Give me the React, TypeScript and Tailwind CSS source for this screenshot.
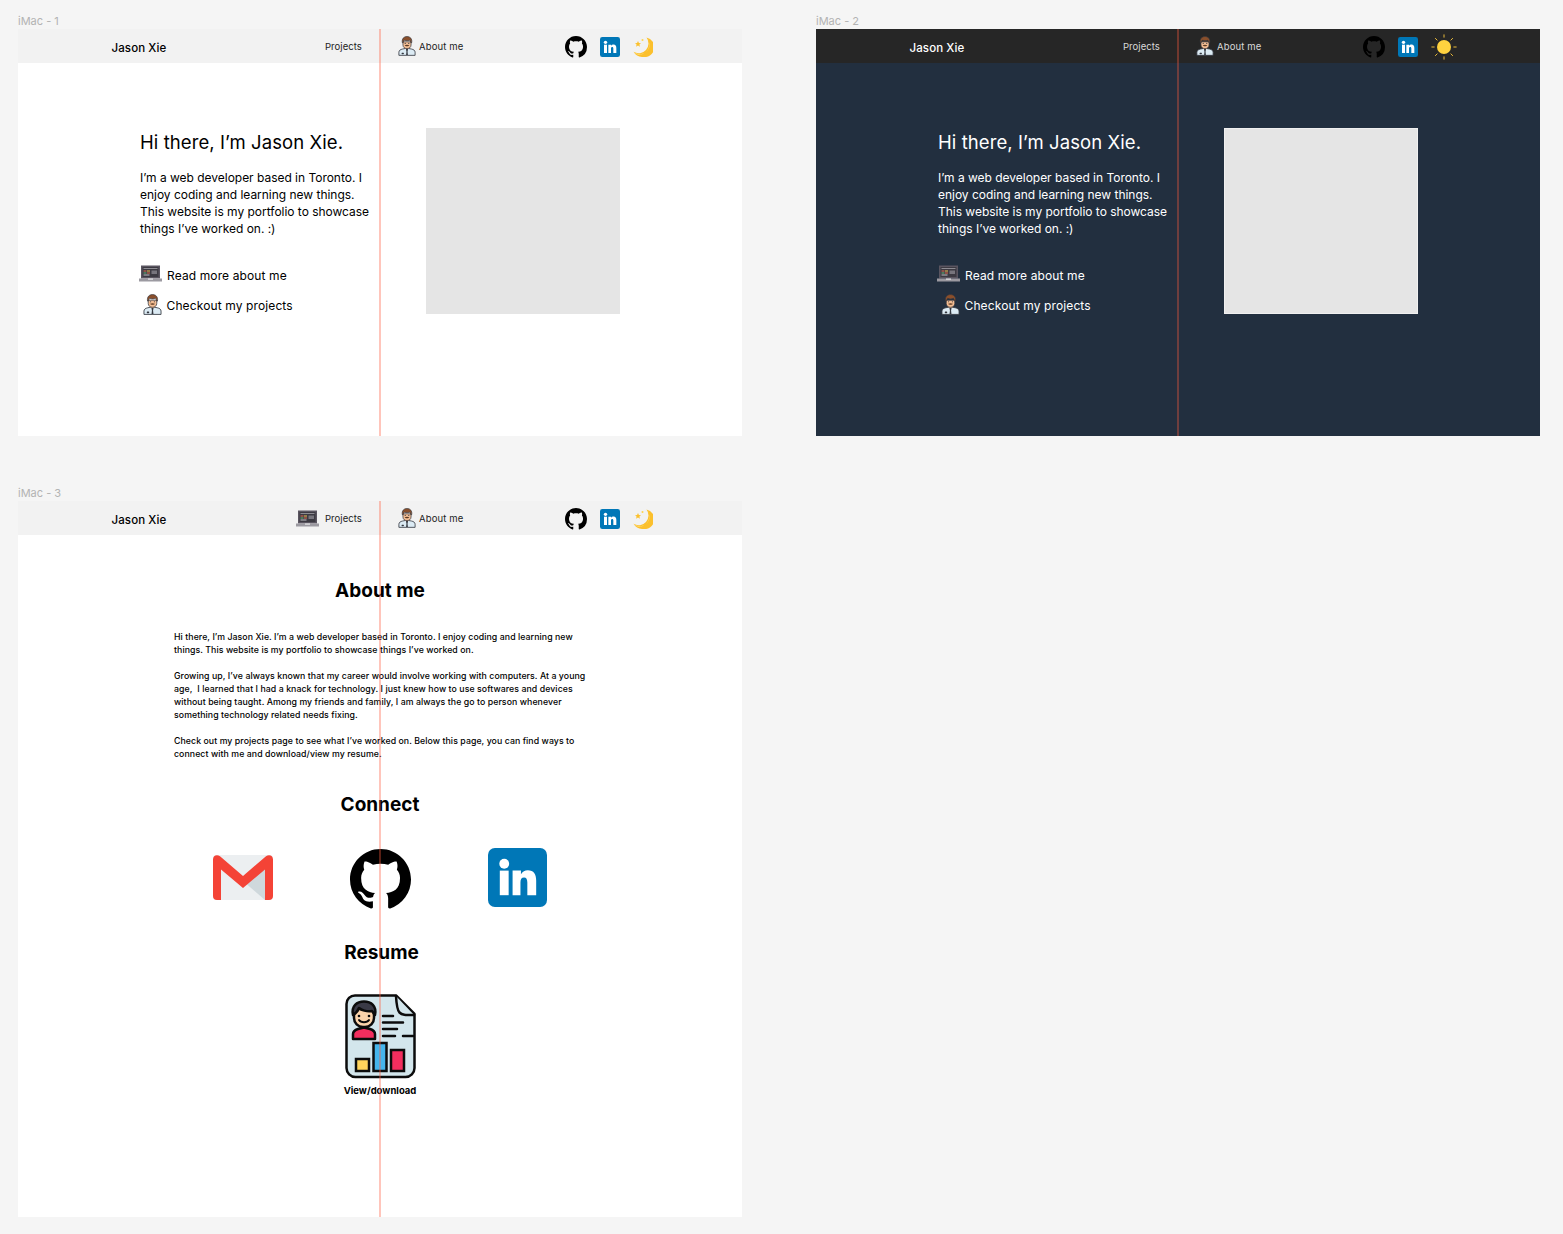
const font = "font-['Inter','Liberation_Sans',sans-serif]";

function GithubMark({ size }: { size: number }) {
  return (
    <svg width={size} height={size} viewBox="0 0 16 16" fill="#000">
      <path d="M8 0C3.58 0 0 3.58 0 8c0 3.54 2.29 6.53 5.47 7.59.4.07.55-.17.55-.38 0-.19-.01-.82-.01-1.49-2.01.37-2.53-.49-2.69-.94-.09-.23-.48-.94-.82-1.13-.28-.15-.68-.52-.01-.53.63-.01 1.08.58 1.23.82.72 1.21 1.87.87 2.33.66.07-.52.28-.87.51-1.07-1.78-.2-3.64-.89-3.64-3.95 0-.87.31-1.59.82-2.15-.08-.2-.36-1.02.08-2.12 0 0 .67-.21 2.2.82.64-.18 1.32-.27 2-.27.68 0 1.36.09 2 .27 1.53-1.04 2.2-.82 2.2-.82.44 1.1.16 1.92.08 2.12.51.56.82 1.27.82 2.15 0 3.07-1.87 3.75-3.65 3.95.29.25.54.73.54 1.48 0 1.07-.01 1.93-.01 2.2 0 .21.15.46.55.38A8.013 8.013 0 0016 8c0-4.42-3.58-8-8-8z" />
    </svg>
  );
}

function LinkedinLogo({ size }: { size: number }) {
  return (
    <svg width={size} height={size} viewBox="0 0 60 60">
      <rect width="60" height="60" rx="7" fill="#0077b7" />
      <circle cx="16.500" cy="16" r="5" fill="#fff" />
      <rect x="12" y="23" width="9" height="25" fill="#fff" />
      <path
        d="M25 23h8.500v3.600c1.700-2.700 4-4 7-4 6 0 8.500 4 8.500 10.500V48h-9V35c0-3-1-5-3.300-5-2.700 0-3.700 2-3.700 5v13H25z"
        fill="#fff"
      />
    </svg>
  );
}

function Moon() {
  return (
    <svg width="20" height="20" viewBox="0 0 20 20">
      <path d="M13.500.5A9.800 9.800 0 0 1 .6 14.800 9.700 9.700 0 0 0 9.500 19.900 9.900 9.900 0 0 0 13.500.5z" fill="#fbc02d" />
      <path d="M13.500.5A8.800 8.800 0 0 1 .6 14.800 7.500 7.500 0 0 0 11.500 16 10 10 0 0 0 13.500.5z" fill="#ffe082" />
      <path d="M5 4l.9 2 2.100.2-1.600 1.400.5 2.100L5 8.600 3.100 9.700l.5-2.100L2 6.200 4.100 6z" fill="#fbc02d" />
      <circle cx="9.500" cy="3" r="1" fill="#ffd54f" />
    </svg>
  );
}

function Sun() {
  return (
    <svg width="26" height="26" viewBox="0 0 26 26">
      <circle cx="13" cy="13" r="7" fill="#ffd23f" />
      <g stroke="#e8b93a" strokeWidth="1" strokeLinecap="round">
        <path d="M13 .8v2.400M13 22.800v2.400M.8 13h2.400M22.800 13h2.400M4.400 4.400l1.700 1.700M19.900 19.900l1.700 1.700M4.400 21.600l1.700-1.700M19.900 6.100l1.700-1.700" />
      </g>
    </svg>
  );
}

function Person({ width }: { width: number }) {
  return (
    <svg width={width} height={width * 1.1} viewBox="0 0 20 22">
      <path d="M1 21.500v-3.500c0-2 1.700-3 4-3.500l5-1 5 1c2.300.5 4 1.500 4 3.500v3.500z" fill="#dcebf4" stroke="#33373f" strokeWidth=".9" />
      <path d="M8.800 14.500h2.400l-.6 3 .4 3.500H9l.4-3.500z" fill="#33373f" />
      <rect x="8" y="11" width="4" height="3.500" fill="#e8a97f" />
      <path d="M5.500 6.500h9v3.500c0 2.500-2 4-4.500 4s-4.500-1.500-4.500-4z" fill="#f3bd93" stroke="#33373f" strokeWidth=".8" />
      <path d="M4.800 7.500C4 3 6.500.6 10 .6s6 2.400 5.200 6.900l-1-.2c-.2-1.400-.6-2.300-1.200-2.700-1.800.8-3.900.8-5.900 0-.6.4-1 1.300-1.300 2.700z" fill="#8a4f2b" stroke="#33373f" strokeWidth=".7" />
      <path d="M7.500 10.300c1.600-.8 3.400-.8 5 0-.4 1.500-4.600 1.500-5 0z" fill="#5d3a22" />
      <circle cx="8" cy="8.200" r=".6" fill="#33373f" />
      <circle cx="12" cy="8.200" r=".6" fill="#33373f" />
      <rect x="4" y="18.500" width="2.500" height="1.800" rx=".5" fill="#33373f" />
    </svg>
  );
}

function Laptop() {
  return (
    <svg width="23" height="17" viewBox="0 0 23 17">
      <rect x="2" y=".5" width="19" height="13" fill="#5a5560" />
      <rect x="3.500" y="2" width="16" height="10" fill="#3c3a42" />
      <rect x="4.500" y="3" width="14" height="1" fill="#8d8b92" />
      <rect x="4.500" y="5.500" width="3" height="1" fill="#e0694f" />
      <rect x="8" y="5.500" width="3" height="1" fill="#e9c14f" />
      <rect x="4.500" y="7.500" width="3" height="1" fill="#5fb878" />
      <rect x="8" y="7.500" width="3" height="1" fill="#e0694f" />
      <rect x="12.500" y="5.500" width="5.500" height="3.500" fill="#77757d" />
      <rect x="4.500" y="9.500" width="6" height="1" fill="#bdbdc2" />
      <rect y="13.500" width="23" height="3" fill="#9c9aa1" />
      <rect x="9" y="13.500" width="5" height="1.200" fill="#e4e4e6" />
    </svg>
  );
}

function Gmail() {
  return (
    <svg width="60" height="45" viewBox="0 0 60 45">
      <path d="M3 0h54a3 3 0 0 1 3 3v39a3 3 0 0 1-3 3H3a3 3 0 0 1-3-3V3a3 3 0 0 1 3-3z" fill="#eceff1" />
      <path d="M30 26L52 10v35z" fill="#cfd8dc" />
      <path d="M0 4.500C0 .5 4-1 7 1.300L30 21 53 1.300C56-1 60 .5 60 4.500V41c0 2.500-1.500 4-4 4h-4V14.500L30 33 8 14.500V45H4c-2.500 0-4-1.500-4-4z" fill="#f44336" />
    </svg>
  );
}

function ResumeIcon() {
  return (
    <svg width="71" height="85" viewBox="0 0 71 85">
      <path d="M10 1.500h41l18.500 18.500v54a9 9 0 0 1-9 9H10.500a9 9 0 0 1-9-9V10a8.500 8.500 0 0 1 8.500-8.500z" fill="#d3e6ec" stroke="#0c0c0c" strokeWidth="2.500" strokeLinejoin="round" />
      <path d="M51 2c.5 9 1 14 3.500 16.500S60 21 69 21" fill="#d3e6ec" stroke="#0c0c0c" strokeWidth="2.500" strokeLinecap="round" />
      <path d="M8 45v-5c0-3 2-4 5-5l6-1.500 6 1.500c3 1 5 2 5 5v5z" fill="#f32e5e" stroke="#0c0c0c" strokeWidth="2.500" strokeLinejoin="round" />
      <rect x="9" y="12" width="20" height="21" rx="9" fill="#fcd4ab" stroke="#0c0c0c" strokeWidth="2.500" />
      <path d="M8 21C6 12 12 7.500 19 7.500S32 12 30 21l-3-4c-5 1-11-1-13-3-1 3-3 5-6 7z" fill="#3a3a46" stroke="#0c0c0c" strokeWidth="2.500" strokeLinejoin="round" />
      <path d="M14 26c2 3 8 3 10 0" fill="none" stroke="#0c0c0c" strokeWidth="2" strokeLinecap="round" />
      <circle cx="14" cy="22" r="1.300" fill="#0c0c0c" />
      <circle cx="24" cy="22" r="1.300" fill="#0c0c0c" />
      <g stroke="#0c0c0c" strokeWidth="2.500" strokeLinecap="round">
        <path d="M38 22h10M38 28.500h20M38 35h14M38 42h12M58 42h10" />
      </g>
      <rect x="11" y="65" width="13" height="12" fill="#ffd45c" stroke="#0c0c0c" strokeWidth="2.500" />
      <rect x="28.500" y="49" width="13" height="28" fill="#45b5ec" stroke="#0c0c0c" strokeWidth="2.500" />
      <rect x="46" y="56" width="13" height="21" fill="#f32e5e" stroke="#0c0c0c" strokeWidth="2.500" />
    </svg>
  );
}

function Header({ dark, projectsIcon }: { dark?: boolean; projectsIcon?: boolean }) {
  const small = dark ? "text-[#d9d9d9]" : "text-[#222]";
  return (
    <div className={`flex h-[34px] items-center ${dark ? "bg-[#262626]" : "bg-[#f2f2f2]"}`}>
      <span className={`ml-[93.500px] w-[184.500px] whitespace-nowrap pt-[6px] text-[11.500px] font-medium tracking-[0.1px] ${dark ? "text-white" : "text-black"}`}>
        Jason Xie
      </span>
      <span className="flex w-[29px] items-center">{projectsIcon && <Laptop />}</span>
      <span className={`w-[73px] whitespace-nowrap pt-[2px] text-[9.500px] tracking-[0.05px] ${small}`}>Projects</span>
      <span className="flex w-[21px] items-center"><Person width={18} /></span>
      <span className={`w-[146px] whitespace-nowrap pt-[2px] text-[9.500px] tracking-[0.15px] ${small}`}>About me</span>
      <span className="flex items-center gap-[13px] pt-px">
        <GithubMark size={22} />
        <LinkedinLogo size={20} />
        <span className="flex">{dark ? <Sun /> : <Moon />}</span>
      </span>
    </div>
  );
}

function Hero({ dark }: { dark?: boolean }) {
  return (
    <div className={`flex h-[373px] pl-[122px] pt-[65px] ${dark ? "bg-[#222f3f] text-white" : "bg-white text-black"}`}>
      <div className="w-[286px]">
        <h1 className="whitespace-nowrap text-[18.500px] leading-[28px] tracking-[0.08px]">Hi there, I’m Jason Xie.</h1>
        <p className="mt-[12.500px] whitespace-nowrap text-[12px] leading-[17px] tracking-[-0.02px]">
          I’m a web developer based in Toronto. I
          <br />
          enjoy coding and learning new things.
          <br />
          This website is my portfolio to showcase
          <br />
          things I’ve worked on. :)
        </p>
        <div className="mt-[27px] flex h-[24px] items-center text-[12px] tracking-[0.12px]">
          <span className="-ml-px -mt-[5px] flex w-[28px]"><Laptop /></span>
          Read more about me
        </div>
        <div className="mt-[6px] flex h-[24px] items-center text-[12px] tracking-[0.12px]">
          <span className="-mt-[2px] flex w-[26.500px] pl-[3px]"><Person width={19} /></span>
          Checkout my projects
        </div>
      </div>
      <div className={`h-[186px] w-[194px] bg-[#e5e5e5] ${dark ? "border border-[#f0f0f0]" : ""}`} />
    </div>
  );
}

function About() {
  const heading = "text-[19px] font-bold leading-[28px] text-black";
  return (
    <div className="h-[682px] bg-white pt-[42px] text-black">
      <h2 className={`text-center ${heading}`}>About me</h2>
      <div className="ml-[156px] mt-[25.500px] whitespace-nowrap text-[8.750px] font-medium leading-[13px] tracking-[0.07px]">
        <p>
          Hi there, I’m Jason Xie. I’m a web developer based in Toronto. I enjoy coding and learning new
          <br />
          things. This website is my portfolio to showcase things I’ve worked on.
        </p>
        <p className="mt-[13px]">
          Growing up, I’ve always known that my career would involve working with computers. At a young
          <br />
          age,&nbsp; I learned that I had a knack for technology. I just knew how to use softwares and devices
          <br />
          without being taught. Among my friends and family, I am always the go to person whenever
          <br />
          something technology related needs fixing.
        </p>
        <p className="mt-[13px]">
          Check out my projects page to see what I’ve worked on. Below this page, you can find ways to
          <br />
          connect with me and download/view my resume.
        </p>
      </div>
      <h2 className={`mt-[30px] text-center ${heading}`}>Connect</h2>
      <div className="mx-auto mt-[29.500px] grid h-[61px] w-[411px] grid-cols-3 items-start justify-items-center">
        <span className="mt-[7px] flex"><Gmail /></span>
        <span className="mt-px flex"><GithubMark size={61} /></span>
        <LinkedinLogo size={59} />
      </div>
      <h2 className={`mt-[30px] pl-[3px] text-center ${heading}`}>Resume</h2>
      <div className="mt-[27px] flex justify-center"><ResumeIcon /></div>
      <p className="mt-[5px] text-center text-[9.500px] font-bold leading-[14px]">View/download</p>
    </div>
  );
}

function Frame({ label, children, lineClass }: { label: string; children: React.ReactNode; lineClass: string }) {
  return (
    <div>
      <div className="h-[14px] text-[11px] leading-[12px] text-[#b3b3b3]">{label}</div>
      <div className="relative">
        {children}
        <div className={`absolute inset-y-0 left-1/2 w-[2px] -translate-x-1/2 ${lineClass}`} />
      </div>
    </div>
  );
}

export default function App() {
  return (
    <div className={`${font} h-[1234px] w-[1563px] overflow-hidden bg-[#f5f5f5] pl-[18px] pt-[15px]`}>
      <div className="grid grid-cols-[724px_724px] gap-x-[74px] gap-y-[51px]">
        <Frame label="iMac - 1" lineClass="bg-[#ff5a3c]/35">
          <Header />
          <Hero />
        </Frame>
        <Frame label="iMac - 2" lineClass="bg-[#ff5a3c]/35">
          <Header dark />
          <Hero dark />
        </Frame>
        <Frame label="iMac - 3" lineClass="bg-[#ff5a3c]/35">
          <Header projectsIcon />
          <About />
        </Frame>
      </div>
    </div>
  );
}
